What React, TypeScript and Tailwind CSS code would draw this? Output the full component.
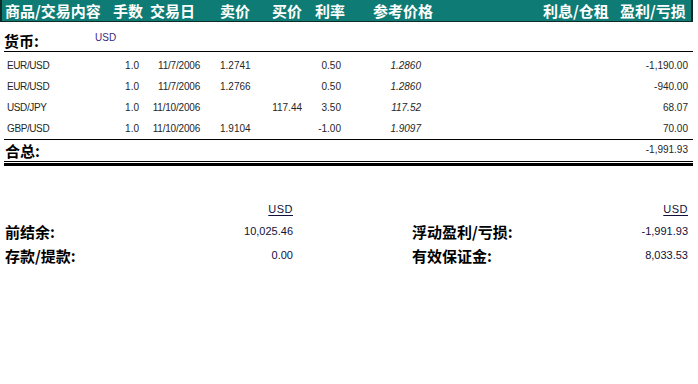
import React from "react";

const cjk = "font-['Noto_Sans_CJK_SC',sans-serif]";
const num = "font-['Liberation_Sans',Arial,sans-serif]";

const rows = [
  { sym: "EUR/USD", qty: "1.0", date: "11/7/2006", sell: "1.2741", buy: "", rate: "0.50", ref: "1.2860", pl: "-1,190.00" },
  { sym: "EUR/USD", qty: "1.0", date: "11/7/2006", sell: "1.2766", buy: "", rate: "0.50", ref: "1.2860", pl: "-940.00" },
  { sym: "USD/JPY", qty: "1.0", date: "11/10/2006", sell: "", buy: "117.44", rate: "3.50", ref: "117.52", pl: "68.07" },
  { sym: "GBP/USD", qty: "1.0", date: "11/10/2006", sell: "1.9104", buy: "", rate: "-1.00", ref: "1.9097", pl: "70.00" },
];

const HEAD = [
  { label: "商品/交易内容", w: "w-[108px]" },
  { label: "手数", w: "w-[37px]" },
  { label: "交易日", w: "w-[70px]" },
  { label: "卖价", w: "w-[52px]" },
  { label: "买价", w: "w-[43px]" },
  { label: "利率", w: "w-[58px]" },
  { label: "参考价格", w: "w-[170px]" },
  { label: "利息/仓租", w: "w-[77px]" },
  { label: "盈利/亏损", w: "" },
];

export default function App() {
  return (
    <div className="w-[698px] h-[384px] bg-white overflow-hidden">
      <div className="w-[693px]">
        {/* Header */}
        <div className={`h-[22px] flex items-center bg-[#0e7c74] border-l-2 border-r-2 border-b border-[#102a28] pl-[3px] text-white font-bold text-[15px] leading-none ${cjk}`}>
          {HEAD.map((h) => (
            <span key={h.label} className={`shrink-0 whitespace-nowrap ${h.w}`}>{h.label}</span>
          ))}
        </div>

        {/* Currency */}
        <div className="ml-[4px] h-[30px] flex items-end border-b border-black">
          <span className={`w-[91px] pb-[1px] font-bold text-[15px] leading-[18px] text-black ${cjk}`}>货币:</span>
          <span className={`mb-[8px] text-[10px] leading-none text-[#3b2a80] ${num}`}>USD</span>
        </div>

        {/* Rows */}
        <div className={`pt-[3px] text-[10px] text-[#262626] ${num}`}>
          {rows.map((r, i) => (
            <div key={i} className="h-[21px] flex items-center">
              <div className="w-[100px] pl-[7px] tracking-[-0.4px]">{r.sym}</div>
              <div className="w-[39px] text-right">{r.qty}</div>
              <div className="w-[61px] text-right tracking-[-0.2px]">{r.date}</div>
              <div className="w-[60px] pl-[20px]">{r.sell}</div>
              <div className="w-[42px] text-right">{r.buy}</div>
              <div className="w-[39px] text-right">{r.rate}</div>
              <div className="w-[80px] text-right italic">{r.ref}</div>
              <div className="flex-1 text-right pr-[5px]">{r.pl}</div>
            </div>
          ))}
        </div>

        {/* Total */}
        <div className="ml-[4px] border-t border-black">
          <div className="h-[22px] flex items-center border-b border-black">
            <span className={`flex-1 pl-[1px] font-bold text-[15px] leading-none text-black ${cjk}`}>合总:</span>
            <span className={`pr-[5px] text-[10px] text-[#262626] -mt-[3px] ${num}`}>-1,991.93</span>
          </div>
          <div className="mt-[1px] h-[3px] bg-black" />
        </div>

        {/* Summary */}
        <div className="mt-[33px] flex">
          <div className="w-[293px] pl-[5px]">
            <div className="h-[20px] flex items-center justify-end">
              <span className={`text-[11px] underline underline-offset-2 tracking-[0.5px] text-[#10103a] ${num}`}>USD</span>
            </div>
            <div className="h-[24px] flex items-center justify-between">
              <span className={`font-bold text-[15px] leading-none text-black ${cjk}`}>前结余:</span>
              <span className={`text-[11px] text-[#10103a] ${num}`}>10,025.46</span>
            </div>
            <div className="h-[24px] flex items-center justify-between">
              <span className={`font-bold text-[15px] leading-none text-black ${cjk}`}>存款/提款:</span>
              <span className={`text-[11px] text-[#10103a] ${num}`}>0.00</span>
            </div>
          </div>
          <div className="ml-[119px] w-[276px]">
            <div className="h-[20px] flex items-center justify-end">
              <span className={`text-[11px] underline underline-offset-2 tracking-[0.5px] text-[#10103a] ${num}`}>USD</span>
            </div>
            <div className="h-[24px] flex items-center justify-between">
              <span className={`font-bold text-[15px] leading-none text-black ${cjk}`}>浮动盈利/亏损:</span>
              <span className={`text-[11px] text-[#10103a] ${num}`}>-1,991.93</span>
            </div>
            <div className="h-[24px] flex items-center justify-between">
              <span className={`font-bold text-[15px] leading-none text-black ${cjk}`}>有效保证金:</span>
              <span className={`text-[11px] text-[#10103a] ${num}`}>8,033.53</span>
            </div>
          </div>
        </div>
      </div>
    </div>
  );
}
